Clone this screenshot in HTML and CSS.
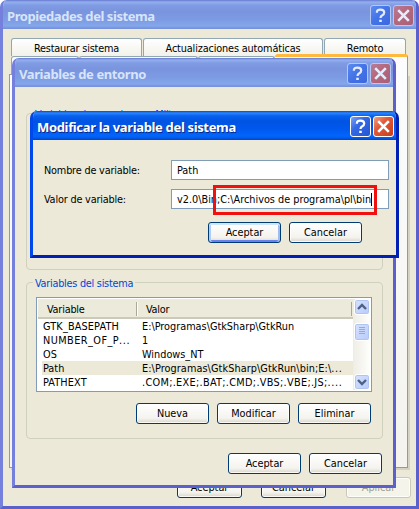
FILE: index.html
```html
<!DOCTYPE html>
<html lang="es">
<head>
<meta charset="utf-8">
<title>Propiedades del sistema</title>
<link rel="stylesheet" href="styles.css">
</head>
<body>
<svg class="defs" width="0" height="0">
  <symbol id="help" viewBox="0 0 21 21"><path d="M6.9 7.8V7Q6.9 4.6 10.4 4.6Q14.2 4.6 14.2 7.5Q14.2 9.3 12.3 10.2Q10.5 11.1 10.5 13" fill="none" stroke="currentColor" stroke-width="2.2"/><path d="M9.2 14.7h2.6v2.4H9.2z" fill="currentColor"/></symbol>
  <symbol id="close" viewBox="0 0 21 21"><path d="M5.2 5.2l10.6 10.6M15.8 5.2L5.2 15.8" fill="none" stroke="currentColor" stroke-width="2.6"/></symbol>
</svg>

<section class="window inactive system">
  <header class="titlebar"><h1 class="t-system">Propiedades del sistema</h1><div class="controls"><i class="ctl"><svg><use href="#help"/></svg></i><i class="ctl close"><svg><use href="#close"/></svg></i></div></header>
  <div class="client">
    <nav class="tabs"><span class="tab"><b>Restaurar sistema</b></span><span class="tab"><b class="w-auto">Actualizaciones automáticas</b></span><span class="tab"><b>Remoto</b></span></nav>
    <div class="tabs-front"><span class="tab-low"></span><span class="tab-low"></span><span class="tab-low third"></span><span class="tab-active"></span></div>
    <div class="page"></div>
    <div class="actions"><button>Aceptar</button><button>Cancelar</button><button class="disabled">Aplicar</button></div>
  </div>
</section>

<section class="window inactive env">
  <header class="titlebar"><h1 class="t-env">Variables de entorno</h1><div class="controls"><i class="ctl"><svg><use href="#help"/></svg></i><i class="ctl close"><svg><use href="#close"/></svg></i></div></header>
  <div class="client">
    <fieldset class="group user"><legend>Variables de usuario para Milt</legend></fieldset>
    <fieldset class="group sys"><legend>Variables del sistema</legend>
      <div class="list">
        <div class="table">
          <div class="head"><span class="c1">Variable</span><span class="c2">Valor</span></div>
          <div class="row"><span class="k gtk">GTK_BASEPATH</span><span class="v">E:\Programas\GtkSharp\GtkRun</span></div>
          <div class="row"><span class="k num">NUMBER_OF_P<em>...</em></span><span class="v">1</span></div>
          <div class="row"><span class="k">OS</span><span class="v">Windows_NT</span></div>
          <div class="row selected"><span class="k">Path</span><span class="v v4">E:\Programas\GtkSharp\GtkRun\bin;E:\<em>...</em></span></div>
          <div class="row"><span class="k pathext">PATHEXT</span><span class="v v5">.COM;.EXE;.BAT;.CMD;.VBS;.VBE;.JS;<em>....</em></span></div>
        </div>
        <div class="scroll">
          <i class="sb"><svg viewBox="0 0 16 16"><path d="M4 10l4-4 4 4" class="chev"/></svg></i>
          <i class="sb thumb"><svg viewBox="0 0 16 16"><path d="M5 4.5h6M5 6.5h6M5 8.5h6M5 10.5h6" class="grip"/></svg></i>
          <i class="sb down"><svg viewBox="0 0 16 16"><path d="M4 6l4 4 4-4" class="chev"/></svg></i>
        </div>
      </div>
      <div class="actions"><button>Nueva</button><button>Modificar</button><button>Eliminar</button></div>
    </fieldset>
    <div class="actions final"><button>Aceptar</button><button>Cancelar</button></div>
  </div>
</section>

<section class="window edit">
  <header class="titlebar"><h1 class="t-edit">Modificar la variable del sistema</h1><div class="controls"><i class="ctl"><svg><use href="#help"/></svg></i><i class="ctl close"><svg><use href="#close"/></svg></i></div></header>
  <div class="client">
    <div class="field"><label>Nombre de variable:</label><div class="input">Path</div></div>
    <div class="field"><label>Valor de variable:</label><div class="input"><span>v2.0\Bin</span><span>;C:\Archivos de programa\pl\bin</span><i class="caret"></i></div></div>
    <div class="actions"><button class="default">Aceptar</button><button>Cancelar</button></div>
  </div>
</section>
<div class="highlight"></div>
</body>
</html>
```

FILE: styles.css
```css
* { box-sizing: border-box; }
body { margin: 0; width: 419px; height: 509px; overflow: hidden; position: relative; background: #fff; color: #000; font: 10.8px/14px "DejaVu Sans Condensed", "DejaVu Sans", sans-serif; }
.defs { position: absolute; }
span, b, label, legend, h1 { white-space: nowrap; }
b, i, em { font-weight: normal; font-style: normal; }

.window { position: absolute; display: flex; flex-direction: column; border-radius: 7px 7px 0 0; border: 3px solid #0038d8; border-top: 0; border-color: #0038d8 #0020b4 #0020b4 #0048e8; background: #ece9d8; overflow: hidden; }
.inactive { border-color: #7088dc #5c60cc #5c60cc #7480dc; }
.system { left: 0; top: 0; width: 419px; height: 509px; }
.env { left: 12px; top: 58px; width: 384px; height: 430px; }
.edit { left: 30px; top: 111px; width: 369px; height: 147px; }

.titlebar { flex: none; height: 29px; margin: 0 -3px; padding: 5px 5px 0 7px; display: flex; justify-content: space-between; background: linear-gradient(#0849cc 0, #2b86fa 2px, #0860ee 5px, #0054e2 10px, #0058ee 18px, #0266fc 25px, #0050dc 28px, #0040c0 29px); }
.inactive .titlebar { background: linear-gradient(#6678d0 0, #94b0ee 2px, #809ce4 5px, #7a94de 11px, #7d9be4 20px, #84a7ea 26px, #7894de 28px, #7890da 29px); }
h1 { margin: 0; font: bold 13px/23px "Noto Sans", sans-serif; color: #fff; text-shadow: 1px 1px 0 #0a2a88; }
.inactive h1 { color: #d8e4f8; text-shadow: none; }
.t-system { letter-spacing: -.43px; }
.t-env { letter-spacing: -.4px; }
.t-edit { letter-spacing: -.34px; }
.controls { display: flex; gap: 2px; }
.ctl { width: 21px; height: 21px; border: 1px solid #fff; border-radius: 3px; color: #fff; background: linear-gradient(135deg, #7da2f4, #3468e4 40%, #2456d4); }
.ctl.close { background: linear-gradient(135deg, #f0a080, #e0593a 40%, #c83c18); }
.ctl svg { display: block; width: 21px; height: 21px; margin: -1px; }
.inactive .ctl { border-color: #b4c8f4; color: #e4ecfc; background: linear-gradient(135deg, #5c8cf0, #4474e8 45%, #3c68e0); }
.inactive .ctl.close { background: linear-gradient(135deg, #b87c98, #b4687c 45%, #a86078); }

button { width: 73px; height: 21px; padding: 0; border: 1px solid #003c74; border-radius: 3px; background: linear-gradient(#fff, #f4f3ee 75%, #dcd6ca); color: #000; font: inherit; box-shadow: inset 0 0 0 1px #fffc; }
.default { box-shadow: inset 0 2px #cee7ff, inset 2px 0 #b4ccf4, inset -2px 0 #a0bcec, inset 0 -2px #6982ee; }
.disabled { border-color: #c9c7ba; color: #a1a192; background: #f5f4ea; }
.actions { display: flex; gap: 8px; }

.system .client { display: flex; flex-direction: column; padding: 9px 6px 0; }
.tabs { display: flex; gap: 1px; height: 18px; padding-left: 2px; letter-spacing: -.18px; }
.tab { width: 131px; height: 18px; border: 1px solid #91a7b4; border-bottom: 0; border-radius: 3px 3px 0 0; background: linear-gradient(#fff, #f2f1ea); text-align: center; line-height: 19px; }
.w-auto { letter-spacing: -.14px; }
.tab:nth-child(2) { width: 180px; }
.tab:nth-child(3) { width: 82px; }
.tabs-front { display: flex; height: 18px; padding-left: 2px; }
.tab-low { width: 68px; height: 18px; border: 1px solid #91a7b4; border-bottom: 0; border-radius: 3px 3px 0 0; background: #fafaf6; }
.tab-low:nth-child(2) { width: 119px; }
.tab-low.third { width: 77px; }
.tab-active { width: 133px; height: 21px; margin-top: -2px; border-right: 1px solid #919b9c; border-top: 3px solid #ffb93c; border-radius: 3px 3px 0 0; background: #fcfcfe; position: relative; }
.page { width: 399px; height: 394px; border: 1px solid #919b9c; background: linear-gradient(#fcfcfe, #f4f3ee); box-shadow: 2px 2px 0 #d6d2c2; }
.system .actions { padding: 9px 0 0 168px; gap: 19px; }
.system button { width: 65px; flex: none; }
.system .disabled { margin-left: 1px; }

.env .client { padding: 26px 11px 0; }
.group { margin: 0; padding: 0; min-width: 0; width: 357px; border: 1px solid #d0d0bf; border-radius: 4px; }
legend { margin-left: 6px; padding: 0 2px; height: 14px; line-height: 17px; color: #0046d5; letter-spacing: -.25px; }
.user { height: 164px; margin-top: -7px; }
.sys { height: 164px; margin-top: 5px; }
.list { display: flex; width: 336px; height: 95px; margin: 8px 0 0 9px; padding: 1px; border: 1px solid #7f9db9; background: #fff; }
.table { width: 315px; }
.head { display: flex; height: 20px; background: #ebeadb; border-bottom: 2px solid #cdc9b8; letter-spacing: -.2px; }
.c1 { width: 99px; height: 14px; margin-top: 3px; line-height: 15px; padding-left: 9px; border-right: 1px solid #aca899; }
.c2 { flex: 1; height: 14px; margin-top: 3px; line-height: 15px; padding-left: 8px; border-left: 1px solid #fff; border-right: 1px solid #aca899; margin-right: 1px; }
.row { display: flex; height: 14px; margin-left: 4px; padding-left: 1px; line-height: 15px; }
.row em { letter-spacing: .6px; }
.selected { background: #ece9d8; }
.k { width: 99px; }
.gtk, .pathext { letter-spacing: .15px; }
.num { letter-spacing: .45px; }
.v4 { letter-spacing: .08px; }
.v5 { letter-spacing: .31px; }
.scroll { width: 17px; background: linear-gradient(90deg, #eeede5, #fefefb); display: flex; flex-direction: column; padding: 0 0 0 1px; }
.sb { width: 16px; height: 16px; border: 1px solid #fff; border-radius: 3px; background: linear-gradient(135deg, #d6e2fe, #b8ccfa); box-shadow: inset 0 0 0 1px #b0c4f0; }
.sb svg { display: block; width: 16px; height: 16px; margin: -1px; }
.thumb { height: 18px; margin-top: 8px; }
.down { margin-top: auto; }
.chev { fill: none; stroke: #4d6185; stroke-width: 2.4; }
.grip { stroke: #8caaf0; stroke-width: 1; }
.sys .actions { margin: 11px 0 0 109px; }
.final { margin: 14px 0 0 202px; }

.edit .client { padding: 20px 7px 0 11px; }
.field { display: flex; height: 20px; margin-bottom: 9px; line-height: 21px; }
label { width: 127px; letter-spacing: -.18px; }
.input { display: flex; width: 218px; height: 20px; padding-left: 5px; line-height: 19px; border: 1px solid #7f9db9; background: #fff; }
.caret { width: 1px; height: 13px; margin-top: 3px; background: #000; }
.edit .actions { margin: 13px 0 0 164px; }
.highlight { position: absolute; left: 213px; top: 185px; width: 164px; height: 30px; border: 3px solid #f01010; }
```
